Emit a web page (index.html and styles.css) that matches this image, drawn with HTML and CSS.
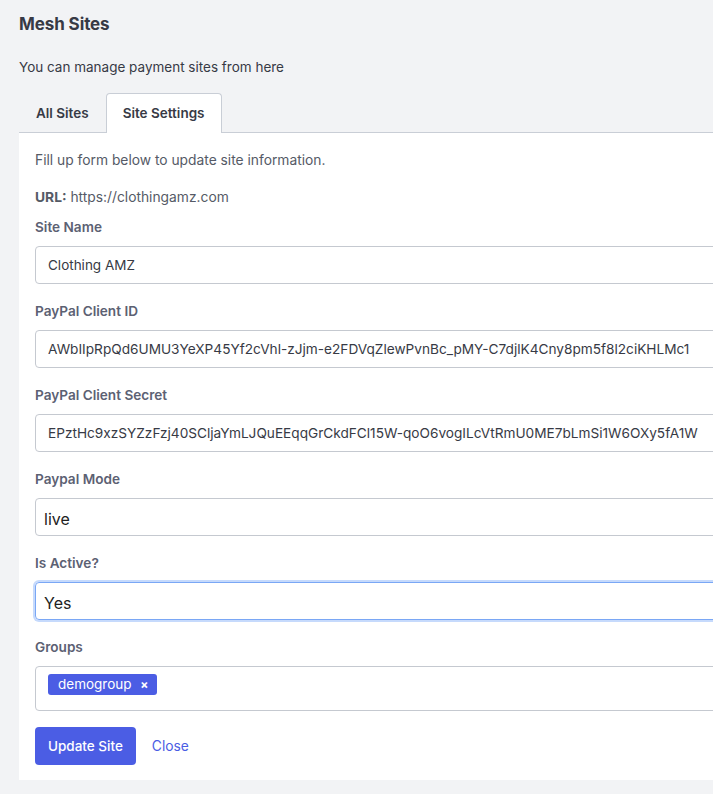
FILE: index.html
```html
<!DOCTYPE html>
<html>
<head>
<meta charset="utf-8">
<link rel="stylesheet" href="styles.css">
</head>
<body>
<div class="page">
  <h1 class="title">Mesh Sites</h1>
  <p class="subtitle">You can manage payment sites from here</p>
  <div class="tabs">
    <div class="tab">All Sites</div>
    <div class="tab active">Site Settings</div>
  </div>
  <div class="panel">
    <p class="intro">Fill up form below to update site information.</p>
    <p class="url"><b>URL:</b> https://clothingamz.com</p>
    <div class="field">
      <label class="label">Site Name</label>
      <div class="input">Clothing AMZ</div>
    </div>
    <div class="field">
      <label class="label">PayPal Client ID</label>
      <div class="input key">AWbIIpRpQd6UMU3YeXP45Yf2cVhl-zJjm-e2FDVqZlewPvnBc_pMY-C7djlK4Cny8pm5f8l2ciKHLMc1</div>
    </div>
    <div class="field">
      <label class="label">PayPal Client Secret</label>
      <div class="input key">EPztHc9xzSYZzFzj40SCljaYmLJQuEEqqGrCkdFCl15W-qoO6vogILcVtRmU0ME7bLmSi1W6OXy5fA1W</div>
    </div>
    <div class="field">
      <label class="label">Paypal Mode</label>
      <div class="input select">live</div>
    </div>
    <div class="field">
      <label class="label">Is Active?</label>
      <div class="input select focused">Yes</div>
    </div>
    <div class="field">
      <label class="label">Groups</label>
      <div class="input multi"><span class="tag">demogroup <span class="x">×</span></span></div>
    </div>
    <div class="actions">
      <button class="btn">Update Site</button>
      <a class="link">Close</a>
    </div>
  </div>
</div>
</body>
</html>
```

FILE: styles.css
```css
html, body { margin: 0; padding: 0; }
body {
  background: #f2f3f5;
  font-family: "Inter", "Liberation Sans", sans-serif;
  color: #373a45;
  width: 713px;
  height: 794px;
  overflow: hidden;
}
.page { padding: 14px 0 0 19px; }
.title { margin: 0; font-size: 17px; font-weight: 700; color: #373a45; line-height: 20px; letter-spacing: -0.1px; }
.subtitle { margin: 23px 0 0; font-size: 13.5px; line-height: 20px; color: #373a45; }
.tabs {
  display: flex;
  margin-top: 16px;
  border-bottom: 1px solid #c9ced6;
  height: 39px;
}
.tab {
  padding: 0 16px 0 16px;
  font-size: 13.5px;
  font-weight: 600;
  line-height: 38px;
  color: #373a45;
  border: 1px solid transparent;
  border-bottom: none;
  border-radius: 4px 4px 0 0;
}
.tab.active {
  background: #fff;
  border-color: #c9ced6;
  margin-bottom: -1px;
  height: 39px;
}
.panel {
  background: #fff;
  padding: 16px 0 15px 16px;
  width: 700px;
}
.intro { margin: 2px 0 0; font-size: 13.8px; line-height: 18px; color: #555a66; }
.url { margin: 19px 0 0; font-size: 13.8px; line-height: 18px; color: #555a66; }
.url b { font-weight: 700; }
.field { margin-top: 12px; }
.field + .field { margin-top: 18px; }
.label {
  display: block;
  font-size: 13.6px;
  font-weight: 600;
  color: #5c6173;
  line-height: 18px;
  margin-bottom: 10px;
}
.input {
  box-sizing: border-box;
  height: 38px;
  border: 1px solid #c5c9d0;
  border-radius: 4px;
  padding: 0 12px;
  font-size: 13.5px;
  line-height: 36px;
  color: #373a45;
  white-space: nowrap;
  overflow: hidden;
}
.key { font-size: 13.65px; }
.select { font-size: 16px; padding-left: 8px; padding-top: 2px; color: #222; }
.focused { border-color: #7aa7f5; box-shadow: 0 0 0 2px #c6dafc; }
.multi { height: 45px; padding: 7px 12px; line-height: 20px; }
.tag {
  display: inline-block;
  background: #4b5de4;
  color: #fff;
  font-size: 13.5px;
  border-radius: 3px;
  padding: 1px 8px 1px 10px;
  line-height: 19px;
}
.tag .x { font-weight: 700; margin-left: 5px; font-size: 12px; }
.actions { display: flex; align-items: center; margin-top: 16px; gap: 16px; }
.btn {
  background: #4b5de4;
  color: #fff;
  border: none;
  border-radius: 4px;
  font-family: inherit;
  font-size: 13.5px;
  font-weight: 500;
  height: 38px;
  padding: 0 13px;
}
.link { color: #4b5de4; font-size: 13.8px; }
```
